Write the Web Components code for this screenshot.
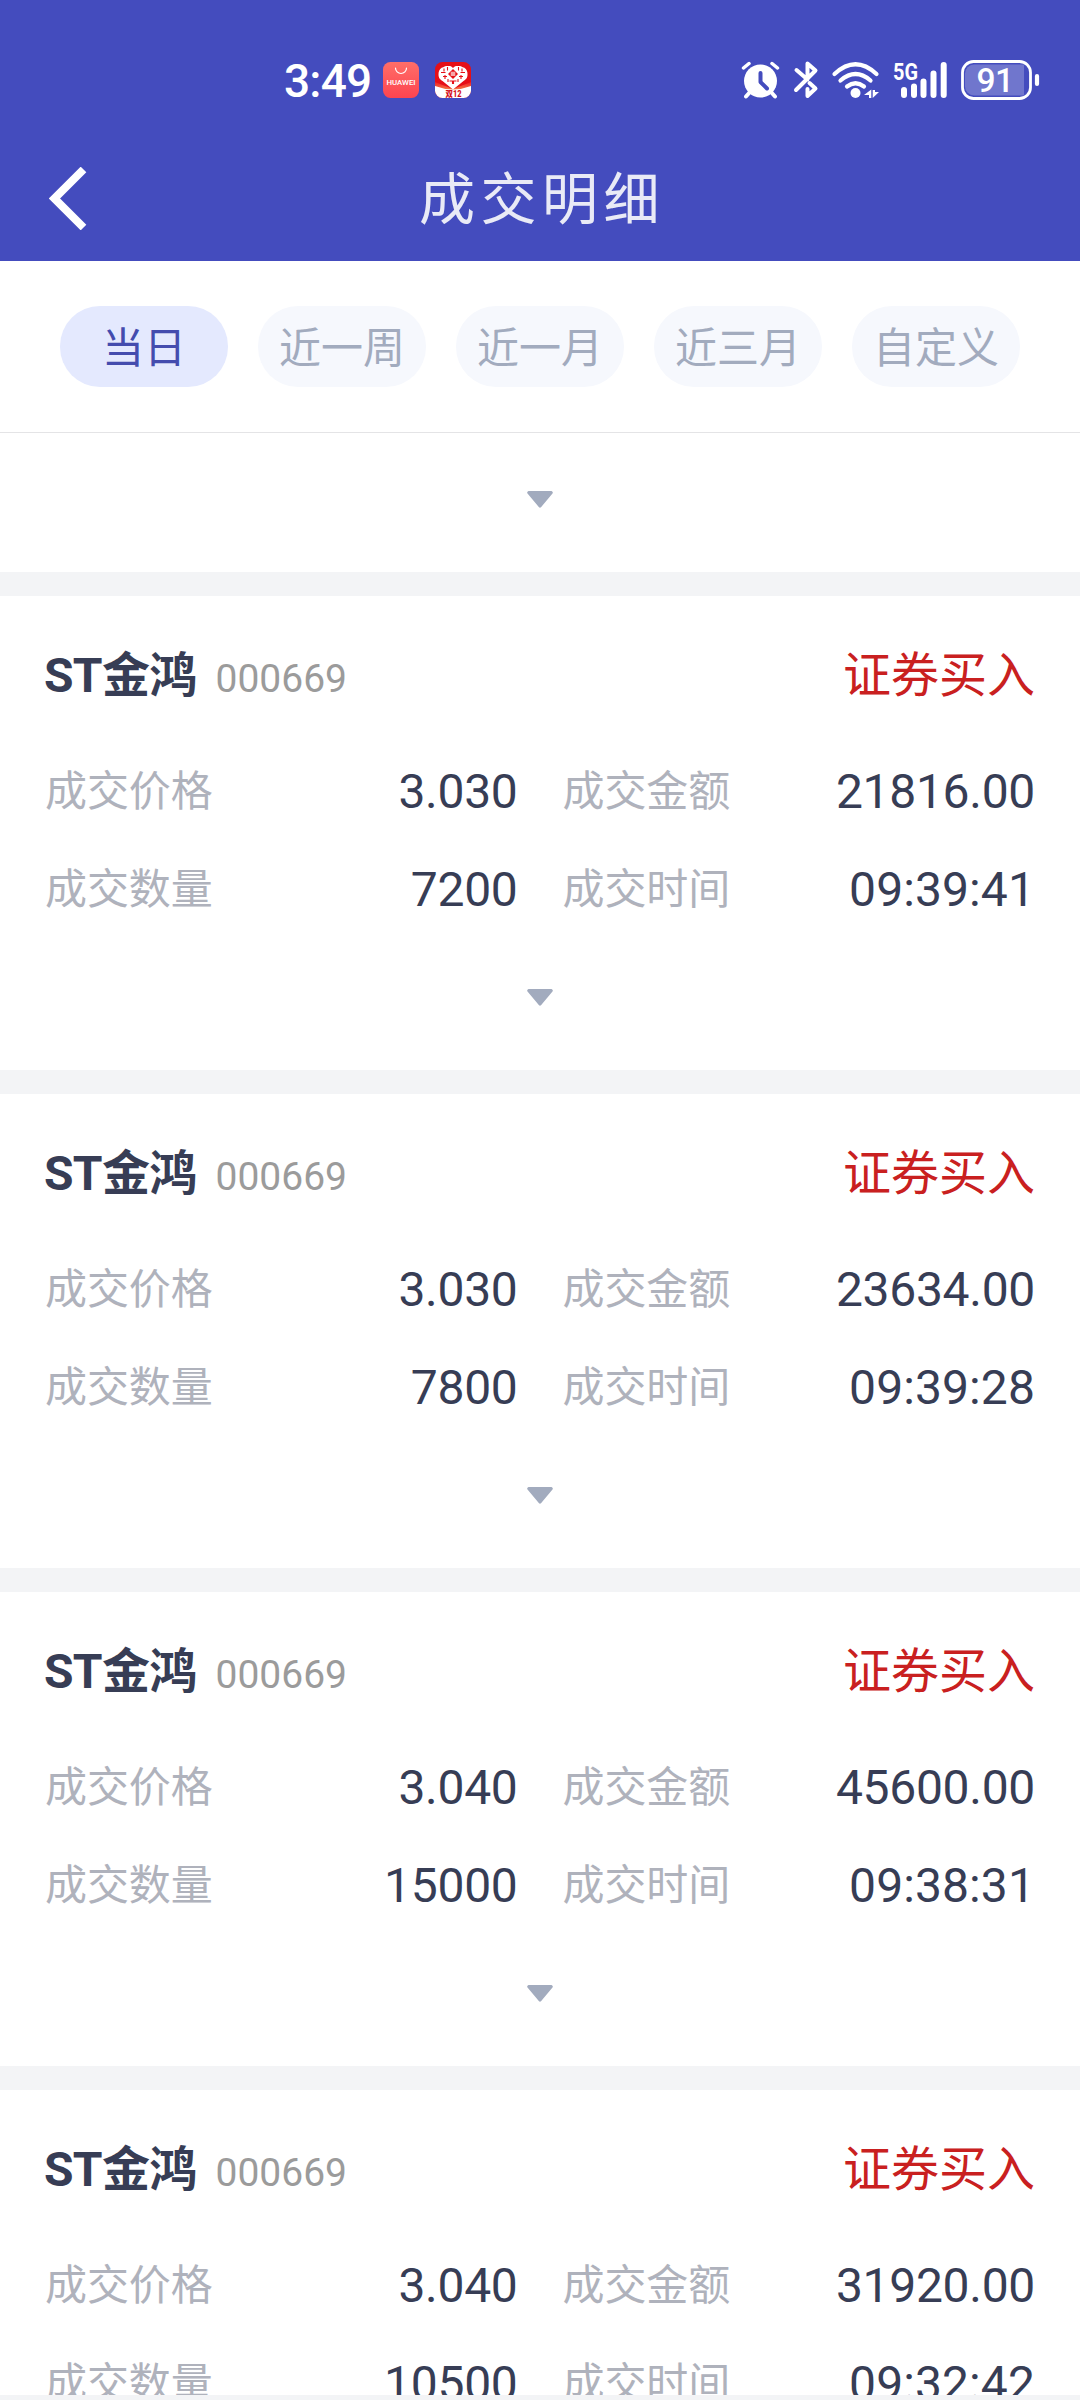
<!DOCTYPE html>
<html lang="zh-CN">
<head>
<meta charset="utf-8">
<title>成交明细</title>
<style>
	html, body {
		background: #f3f4f6;
		height: 2400px;
		margin: 0;
		overflow: hidden;
		width: 1080px;
	}
</style>
</head>
<body>
<trade-page></trade-page>

<script>
/**
 * Base class, clones the static template of the subclass into a shadow root.
 */
class BaseElement extends HTMLElement {
	constructor() {
		super();
		this.attachShadow({mode:'open'});
		this.shadowRoot.innerHTML = this.constructor.template;
	}
}

/**
 * Phone status bar: clock, notification icons, system icons
 */
class StatusBar extends BaseElement {
	static template = `
		<style>
			:host {
				align-items: center;
				box-sizing: border-box;
				color: white;
				display: flex;
				height: 135px;
				padding: 24px 41px 0 284px;
			}

			svg {
				display: block;
				flex: none;
				overflow: visible;
			}

			#time {
				font-size: 46px;
				font-weight: 500;
				letter-spacing: -.8px;
				line-height: 50px;
				padding-top: 2px;
				width: 99px;
			}

			#market { margin-right: 16px; }

			#system {
				display: flex;
				margin-left: auto;
			}
		</style>

		<div id="time">3:49</div>

		<svg id="market" width="36" height="36" viewBox="0 0 36 36">
			<defs>
				<linearGradient id="coral" x1="0" y1="0" x2="0" y2="1">
					<stop offset="0" stop-color="#ff6e68"/>
					<stop offset="1" stop-color="#fd4450"/>
				</linearGradient>
			</defs>
			<rect width="36" height="36" rx="7.5" fill="url(#coral)"/>
			<path d="M12.500 6a5.500 5.500 0 0 0 11 0" fill="none" stroke="#fff" stroke-width="1.200" stroke-linecap="round"/>
			<text x="18" y="23" text-anchor="middle" textLength="29" lengthAdjust="spacingAndGlyphs" font-family="Roboto" font-size="6.800" font-weight="500" fill="#fff">HUAWEI</text>
		</svg>

		<svg width="36" height="36" viewBox="0 0 36 36">
			<defs>
				<clipPath id="round"><rect width="36" height="36" rx="7.500"/></clipPath>
				<linearGradient id="glow" x1="0" y1="0" x2="0" y2="1">
					<stop offset="0" stop-color="#ee1c24"/>
					<stop offset="1" stop-color="#f59a52"/>
				</linearGradient>
			</defs>
			<g clip-path="url(#round)">
				<rect width="36" height="36" fill="#e60f17"/>
				<path d="M0 20l18 7 18-7v10H0z" fill="url(#glow)"/>
				<path d="M0 24q18 7 36 0v12H0z" fill="#fff"/>
				<path d="M18 6c2-2.500 4-2 6-2 3 0 3 1.500 5 1.500 3 2 3.500 4 3.500 7 0 4-2 5-4 6.500L18 27.500 7.500 19c-2-1.500-4-2.500-4-6.500 0-3 .5-5 3.500-7 2 0 2-1.500 5-1.500 2 0 4-.5 6 2z" fill="#fff"/>
				<path d="M9 6.500v3M6 10.500h4.500M12.500 5v3.500M8 14.500h4M10 13v4M27 6.500v3M30 10.500h-4.500M23.500 5v3.500M28 14.500h-4M26 13v4M14.500 19h3v3M21.500 19h-3v3M13 17v3M23 17v3" fill="none" stroke="#e60f17" stroke-width="1.100"/>
				<path d="M18 7l5 5-5 5-5-5z" fill="#e60f17"/>
				<path d="M15.500 11h5M15.500 13h5M17 9.500v4.500M19 9.500v4.500" stroke="#fff" stroke-width=".8"/>
				<text x="18.500" y="34.500" text-anchor="middle" textLength="16" lengthAdjust="spacingAndGlyphs" font-family="Roboto, 'Noto Sans CJK SC'" font-size="8.500" font-weight="900" fill="#d5121b">双12</text>
			</g>
		</svg>

		<svg id="system" width="299" height="40" viewBox="740 59 299 40" fill="none" stroke="#fff" stroke-linecap="round" stroke-linejoin="round">
			<!-- alarm -->
			<circle cx="760.500" cy="80" r="16.500" fill="#fff" stroke="none"/>
			<path d="M743.500 67l5.500-4.500M777.500 67l-5.500-4.500" stroke-width="3.500"/>
			<path d="M750 91l-4 4.500M771 91l4 4.500" stroke-width="4"/>
			<path d="M760.500 72v9l6.500 6.500" stroke="#444cbe" stroke-width="4"/>
			<!-- bluetooth -->
			<path d="M796.500 69l11 9.500M807.500 78V62.500l8 7-19.500 19.500M807.500 88v7l8-7.500-6-5.500" stroke-width="4"/>
			<!-- wifi with traffic arrows -->
			<path d="M834.500 73q21-19.500 42 0M840.500 79.500q15-13 30 0M847 85.500q8.500-6.500 17 0" stroke-width="4.200"/>
			<circle cx="855.500" cy="92" r="5" fill="#fff" stroke="none"/>
			<path d="M871.300 88.500v8.500h-2.300v-3h-5zM872.700 97v-8h2.300v2h4z" fill="#fff" stroke="none"/>
			<!-- mobile signal -->
			<text x="893" y="78.500" textLength="25" lengthAdjust="spacingAndGlyphs" font-family="Roboto" font-size="24" font-weight="700" fill="#fff" stroke="none">5G</text>
			<path d="M904 89v5M914 85.500V94M923.500 80.500V94M933.500 72.500V94M943.700 64V94" stroke-width="6"/>
			<!-- battery -->
			<path d="M974 63.500h50v31h-50a9 9 0 0 1-9-9v-13a9 9 0 0 1 9-9z" fill="#fff" fill-opacity=".24" stroke="none"/>
			<rect x="962.500" y="60.500" width="68" height="37" rx="11" stroke-width="2.800"/>
			<path d="M1037 75v8" stroke-width="4.200"/>
			<text x="995" y="90.500" text-anchor="middle" font-family="Roboto" font-size="33.500" font-weight="500" letter-spacing="-.5" fill="#fff" stroke="none">91</text>
		</svg>
	`;
}

/**
 * Navigation bar with the back arrow, the title is slotted
 */
class NavBar extends BaseElement {
	static template = `
		<style>
			:host {
				align-items: center;
				color: #e9eaf6;
				display: grid;
				grid-template-columns: 140px 1fr 140px;
				height: 126px;
			}

			svg {
				display: block;
				margin-left: 49px;
			}

			#title {
				font-size: 56px;
				letter-spacing: 5.5px;
				line-height: 80px;
				padding: 4px 0 0 4px;
				text-align: center;
			}
		</style>

		<svg width="38" height="63" viewBox="0 0 38 63" fill="none" stroke="#fff" stroke-width="8">
			<path d="M34.500 2.500L5.500 31.500l29 29"/>
		</svg>
		<div id="title"><slot></slot></div>
	`;
}

/**
 * Date range pill, "active" marks the chosen one
 */
class RangeTab extends BaseElement {
	static template = `
		<style>
			:host {
				background: #f6f8fd;
				border-radius: 40px;
				color: #a2abbe;
				flex: 1;
				font-size: 42px;
				height: 81px;
				line-height: 85px;
				text-align: center;
			}

			:host([active]) {
				background: #e4e9fe;
				color: #444cae;
			}
		</style>
		<slot></slot>
	`;
}

/**
 * Row of range pills
 */
class RangeTabs extends BaseElement {
	static template = `
		<style>
			:host {
				background: white;
				border-bottom: 1px solid #e4e4e6;
				box-sizing: border-box;
				display: flex;
				gap: 30px;
				height: 172px;
				padding: 45px 60px 0;
			}
		</style>
		<slot></slot>
	`;
}

/**
 * Small triangle which unfolds a card
 */
class FoldArrow extends BaseElement {
	static template = `
		<style>
			:host {
				box-sizing: border-box;
				display: flex;
				flex: none;
				height: 133px;
				justify-content: center;
				padding-top: 52px;
			}

			:host([tail]) {
				background: white;
				height: 139px;
				padding-top: 58px;
			}
		</style>
		<svg width="26" height="17" viewBox="0 0 26 17">
			<path d="M1.500 0h23q2 .8 1 2.500L14.200 16q-1.200 1.500-2.400 0L.5 2.500Q-.5.800 1.500 0z" fill="#a2abbe"/>
		</svg>
	`;
}

/**
 * One deal. Values come from the attributes price, amount, count and time.
 */
class TradeCard extends BaseElement {
	static template = `
		<style>
			:host {
				background: white;
				color: #373d55;
				display: block;
				flex: none;
				height: 474px;
			}

			header {
				align-items: baseline;
				box-sizing: border-box;
				display: flex;
				height: 145px;
				line-height: 72px;
				padding: 44px 45px 0 44px;
			}

			#name {
				font-size: 48px;
				font-weight: 700;
				letter-spacing: -.7px;
			}

			#code {
				color: #9b9b9b;
				font-size: 39px;
				margin-left: 19px;
			}

			#side {
				color: #c92020;
				font-size: 48px;
				margin-left: auto;
			}

			dl {
				column-gap: 45px;
				display: grid;
				grid-template-columns: 1fr 1fr;
				line-height: 101px;
				margin: 0;
				padding: 0 45px;
			}

			dl > div {
				display: flex;
				height: 98px;
				justify-content: space-between;
			}

			dt {
				color: #afb2bc;
				font-size: 42px;
				letter-spacing: -.1px;
			}

			dd {
				font-size: 48px;
				letter-spacing: -.3px;
				margin: 0;
			}

			#time { letter-spacing: .1px; }
		</style>

		<header>
			<span id="name">ST金鸿</span>
			<span id="code">000669</span>
			<span id="side">证券买入</span>
		</header>
		<dl>
			<div><dt>成交价格</dt><dd id="price"></dd></div>
			<div><dt>成交金额</dt><dd id="amount"></dd></div>
			<div><dt>成交数量</dt><dd id="count"></dd></div>
			<div><dt>成交时间</dt><dd id="time"></dd></div>
		</dl>
		<fold-arrow></fold-arrow>
	`;

	connectedCallback() {
		for (const key of ['price', 'amount', 'count', 'time']) {
			this.shadowRoot.getElementById(key).textContent = this.getAttribute(key);
		}
	}
}

/**
 * The whole screen
 */
class TradePage extends BaseElement {
	static template = `
		<style>
			:host {
				display: flex;
				flex-direction: column;
				font-family: Roboto, "Noto Sans CJK SC", sans-serif;
				height: 2395px;
				overflow: hidden;
			}

			#top { background: #444cbe; }

			#list {
				display: flex;
				flex: 1;
				flex-direction: column;
				gap: 24px;
				min-height: 0;
				overflow: hidden;
			}
		</style>

		<div id="top">
			<status-bar></status-bar>
			<nav-bar>成交明细</nav-bar>
		</div>
		<range-tabs>
			<range-tab active>当日</range-tab>
			<range-tab>近一周</range-tab>
			<range-tab>近一月</range-tab>
			<range-tab>近三月</range-tab>
			<range-tab>自定义</range-tab>
		</range-tabs>
		<div id="list">
			<fold-arrow tail></fold-arrow>
			<trade-card price="3.030" amount="21816.00" count="7200" time="09:39:41"></trade-card>
			<trade-card price="3.030" amount="23634.00" count="7800" time="09:39:28"></trade-card>
			<trade-card price="3.040" amount="45600.00" count="15000" time="09:38:31"></trade-card>
			<trade-card price="3.040" amount="31920.00" count="10500" time="09:32:42"></trade-card>
		</div>
	`;
}

customElements.define('status-bar', StatusBar);
customElements.define('nav-bar', NavBar);
customElements.define('range-tab', RangeTab);
customElements.define('range-tabs', RangeTabs);
customElements.define('fold-arrow', FoldArrow);
customElements.define('trade-card', TradeCard);
customElements.define('trade-page', TradePage);
</script>
</body>
</html>
